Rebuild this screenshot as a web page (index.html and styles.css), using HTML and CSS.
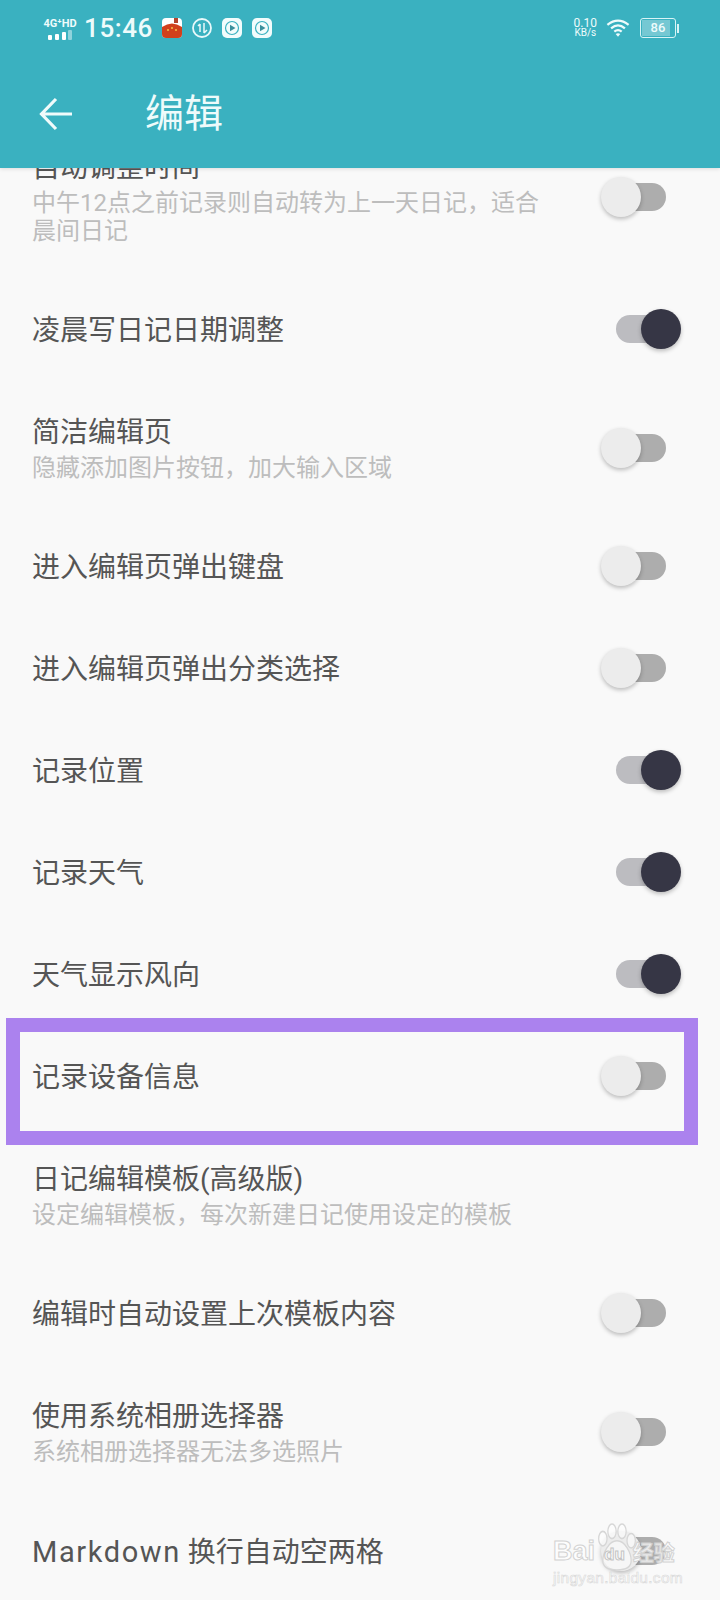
FILE: index.html
```html
<!DOCTYPE html>
<html lang="zh-CN">
<head>
  <meta charset="UTF-8">
  <meta name="viewport" content="width=device-width, initial-scale=1.0">
  <title>编辑</title>
  <link rel="stylesheet" href="styles.css">
</head>
<body>
  <div class="tela">
    <header class="topo">
      <div class="status">
        <div class="rede">
          <span class="rede-txt">4G⁺HD</span>
          <svg width="24" height="10" viewBox="0 0 24 10"><rect x="0" y="5" width="4" height="5" rx="1" fill="#fff"/><rect x="7" y="4" width="4" height="6" rx="1" fill="#fff"/><rect x="14" y="2" width="4" height="8" rx="1" fill="#fff"/><rect x="20" y="0" width="4" height="10" rx="1" fill="#8fd3dc"/></svg>
        </div>
        <span class="hora">15:46</span>
        <svg class="ic" width="20" height="20" viewBox="0 0 20 20"><rect width="20" height="20" rx="4" fill="#fff"/><path d="M0 9 Q10 2 20 9 V16 Q20 20 16 20 H4 Q0 20 0 16Z" fill="#d1401c"/><rect x="12" y="0" width="4" height="5" fill="#b5452e"/><circle cx="6" cy="12" r="1" fill="#f5c04a"/><circle cx="10" cy="10" r="1" fill="#f5c04a"/><circle cx="14" cy="12" r="1" fill="#f5c04a"/></svg>
        <svg class="ic" width="20" height="20" viewBox="0 0 20 20"><circle cx="10" cy="10" r="9" fill="none" stroke="#e9f9fa" stroke-width="1.800"/><path d="M8 6 V14 M12 5 V15 M12 15 L15 12 M8 6 L6 8" fill="none" stroke="#e9f9fa" stroke-width="1.500"/></svg>
        <svg class="ic" width="20" height="20" viewBox="0 0 20 20"><rect width="20" height="20" rx="5" fill="#f2fcfc"/><circle cx="10" cy="10" r="6.500" fill="none" stroke="#3ab1c0" stroke-width="1.200"/><path d="M8 6.800 L13.500 10 L8 13.200Z" fill="#3a8f9c"/></svg>
        <svg class="ic" width="20" height="20" viewBox="0 0 20 20"><rect width="20" height="20" rx="5" fill="#f2fcfc"/><circle cx="10" cy="10" r="6.500" fill="none" stroke="#3ab1c0" stroke-width="1.200"/><path d="M8 6.800 L13.500 10 L8 13.200Z" fill="#3a8f9c"/></svg>
        <div class="status-dir">
          <div class="veloc"><span>0.10</span><span class="veloc-un">KB/s</span></div>
          <svg width="24" height="20" viewBox="0 0 26 20"><path d="M1.500 6.500 Q13 -2.500 24.500 6.500 M5.500 10.500 Q13 4 20.500 10.500 M9 14 Q13 10.500 17 14" fill="none" stroke="#eefbfb" stroke-width="2.400"/><path d="M10.500 16.500 Q13 15 15.500 16.500 L13 19.500Z" fill="#eefbfb"/></svg>
          <div class="bateria"><div class="bateria-nivel"></div><span class="bateria-txt">86</span></div>
          <div class="bateria-pino"></div>
        </div>
      </div>
      <div class="barra">
        <svg class="voltar" width="34" height="34" viewBox="0 0 34 34"><path d="M33 17 H3 M17 2 L2.500 17 L17 32" fill="none" stroke="#f0fbfb" stroke-width="3.200"/></svg>
        <h1>编辑</h1>
      </div>
    </header>

    <main class="lista">
      <div class="item">
        <div class="textos"><div class="titulo">自动调整时间</div><div class="sub">中午12点之前记录则自动转为上一天日记，适合晨间日记</div></div>
        <div class="toggle"><div class="pista"></div><div class="bola"></div></div>
      </div>
      <div class="item">
        <div class="textos"><div class="titulo">凌晨写日记日期调整</div></div>
        <div class="toggle ligado"><div class="pista"></div><div class="bola"></div></div>
      </div>
      <div class="item">
        <div class="textos"><div class="titulo">简洁编辑页</div><div class="sub">隐藏添加图片按钮，加大输入区域</div></div>
        <div class="toggle"><div class="pista"></div><div class="bola"></div></div>
      </div>
      <div class="item">
        <div class="textos"><div class="titulo">进入编辑页弹出键盘</div></div>
        <div class="toggle"><div class="pista"></div><div class="bola"></div></div>
      </div>
      <div class="item">
        <div class="textos"><div class="titulo">进入编辑页弹出分类选择</div></div>
        <div class="toggle"><div class="pista"></div><div class="bola"></div></div>
      </div>
      <div class="item">
        <div class="textos"><div class="titulo">记录位置</div></div>
        <div class="toggle ligado"><div class="pista"></div><div class="bola"></div></div>
      </div>
      <div class="item">
        <div class="textos"><div class="titulo">记录天气</div></div>
        <div class="toggle ligado"><div class="pista"></div><div class="bola"></div></div>
      </div>
      <div class="item">
        <div class="textos"><div class="titulo">天气显示风向</div></div>
        <div class="toggle ligado"><div class="pista"></div><div class="bola"></div></div>
      </div>
      <div class="item">
        <div class="textos"><div class="titulo">记录设备信息</div></div>
        <div class="toggle"><div class="pista"></div><div class="bola"></div></div>
      </div>
      <div class="item">
        <div class="textos"><div class="titulo">日记编辑模板(高级版)</div><div class="sub">设定编辑模板，每次新建日记使用设定的模板</div></div>
      </div>
      <div class="item">
        <div class="textos"><div class="titulo">编辑时自动设置上次模板内容</div></div>
        <div class="toggle"><div class="pista"></div><div class="bola"></div></div>
      </div>
      <div class="item">
        <div class="textos"><div class="titulo">使用系统相册选择器</div><div class="sub">系统相册选择器无法多选照片</div></div>
        <div class="toggle"><div class="pista"></div><div class="bola"></div></div>
      </div>
      <div class="item">
        <div class="textos"><div class="titulo"><span class="latino">Markdown</span> 换行自动空两格</div></div>
        <div class="toggle"><div class="pista"></div><div class="bola"></div></div>
      </div>
    </main>

    <div class="destaque"></div>

    <div class="marca">
      <svg class="marca-pata" width="40" height="48" viewBox="0 0 48 46" preserveAspectRatio="none"><g fill="rgba(255,255,255,0.55)" stroke="#d6d6d6" stroke-width="1.500"><ellipse cx="7" cy="15" rx="5" ry="7"/><ellipse cx="18" cy="8" rx="5" ry="7"/><ellipse cx="30" cy="8" rx="5" ry="7"/><ellipse cx="41" cy="17" rx="5" ry="7"/><path d="M24 17 C14 17 7 29 7 36 C7 43 14 45 24 45 C34 45 41 43 41 36 C41 29 34 17 24 17Z"/></g></svg>
      <div class="marca-nome"><span>Bai</span><span class="marca-du">du</span><span class="marca-jy">经验</span></div>
      <div class="marca-url">jingyan.baidu.com</div>
    </div>
  </div>
</body>
</html>
```

FILE: styles.css
```css
* {
  box-sizing: border-box;
}
html, body {
  margin: 0;
  padding: 0;
}
body {
  font-family: Roboto, "Noto Sans CJK SC", sans-serif;
  background-color: #f9f9f9;
}
.tela {
  position: relative;
  width: 720px;
  height: 1600px;
  overflow: hidden;
}

/* topo */
.topo {
  position: relative;
  z-index: 2;
  height: 168px;
  background-color: #3ab1c0;
  box-shadow: 0 1px 4px rgba(0,0,0,0.12);
  color: #eefbfb;
}
.status {
  display: flex;
  align-items: center;
  height: 56px;
  padding: 0 41px 0 42px;
}
.rede {
  display: flex;
  flex-direction: column;
  align-items: center;
  width: 36px;
  margin-right: 6px;
}
.rede-txt {
  font-size: 11px;
  font-weight: 700;
  line-height: 13px;
  white-space: nowrap;
}
.hora {
  font-size: 26px;
  font-weight: 500;
  letter-spacing: 0.6px;
  margin-right: 9px;
}
.ic {
  margin-right: 10px;
}
.status-dir {
  display: flex;
  align-items: center;
  margin-left: auto;
}
.veloc {
  display: flex;
  flex-direction: column;
  align-items: center;
  font-size: 12px;
  line-height: 10px;
  margin-right: 9px;
}
.veloc-un {
  font-size: 10px;
}
.bateria {
  position: relative;
  width: 36px;
  height: 20px;
  margin-left: 10px;
  border: 1.500px solid #d8f4f6;
  border-radius: 3px;
  text-align: center;
  font-size: 13px;
  font-weight: 500;
  line-height: 17px;
}
.bateria-nivel {
  position: absolute;
  left: 1px;
  top: 1px;
  bottom: 1px;
  width: 28px;
  background-color: rgba(255,255,255,0.3);
}
.bateria-txt {
  position: relative;
}
.bateria-pino {
  width: 2px;
  height: 9px;
  margin-left: 1px;
  background-color: #d8f4f6;
}
.barra {
  display: flex;
  align-items: center;
  height: 112px;
  padding: 0 0 0 39px;
}
.voltar {
  margin-top: 3px;
}
.barra h1 {
  margin: 3px 0 0 72px;
  font-size: 39px;
  font-weight: 400;
  line-height: 50px;
}

/* lista */
.lista {
  margin-top: -53px;
}
.item {
  display: flex;
  align-items: center;
  padding: 0 39px 0 32px;
}
.textos {
  flex: 1;
  min-width: 0;
  padding: 37px 0 33px;
}
.titulo {
  font-size: 28px;
  line-height: 32px;
  color: #555;
}
.latino {
  font-size: 29px;
  letter-spacing: 1.6px;
}
.sub {
  margin-top: 5px;
  width: 510px;
  font-size: 24px;
  line-height: 28px;
  color: #bdbdbd;
}

/* toggle */
.toggle {
  position: relative;
  flex: none;
  width: 80px;
  height: 40px;
  padding: 6px 0 0 15px;
}
.pista {
  width: 50px;
  height: 28px;
  border-radius: 14px;
  background-color: #adadad;
}
.bola {
  position: absolute;
  left: 0;
  top: 0;
  width: 40px;
  height: 40px;
  border-radius: 50%;
  background-color: #ececec;
  box-shadow: 0 2px 4px rgba(0,0,0,0.25);
}
.ligado .pista {
  background-color: #bcbcc0;
}
.ligado .bola {
  left: 40px;
  background-color: #363645;
}

/* moldura roxa por cima da lista */
.destaque {
  position: absolute;
  left: 6px;
  top: 1018px;
  width: 692px;
  height: 127px;
  border: 14px solid #ab82ee;
}

/* marca d'agua */
.marca {
  position: absolute;
  left: 553px;
  top: 1523px;
  width: 130px;
  height: 76px;
  z-index: 3;
}
.marca-pata {
  position: absolute;
  left: 44px;
  top: 0;
}
.marca-nome {
  position: absolute;
  left: 0;
  top: 11px;
  white-space: nowrap;
  font-family: "Liberation Sans", "Noto Sans CJK SC", sans-serif;
  font-size: 27px;
  font-weight: 700;
  line-height: 34px;
  color: rgba(255,255,255,0.75);
  -webkit-text-stroke: 1px #d2d2d2;
}
.marca-du {
  margin-left: 9px;
  font-size: 17px;
  -webkit-text-stroke: 1px #c4c4c4;
}
.marca-jy {
  margin-left: 8px;
  font-size: 21px;
}
.marca-url {
  position: absolute;
  left: 0;
  top: 46px;
  font-family: "Liberation Sans", sans-serif;
  font-size: 15.500px;
  line-height: 18px;
  letter-spacing: 0.3px;
  white-space: nowrap;
  color: rgba(255,255,255,0.8);
  -webkit-text-stroke: 0.6px #d8d8d8;
}
```
